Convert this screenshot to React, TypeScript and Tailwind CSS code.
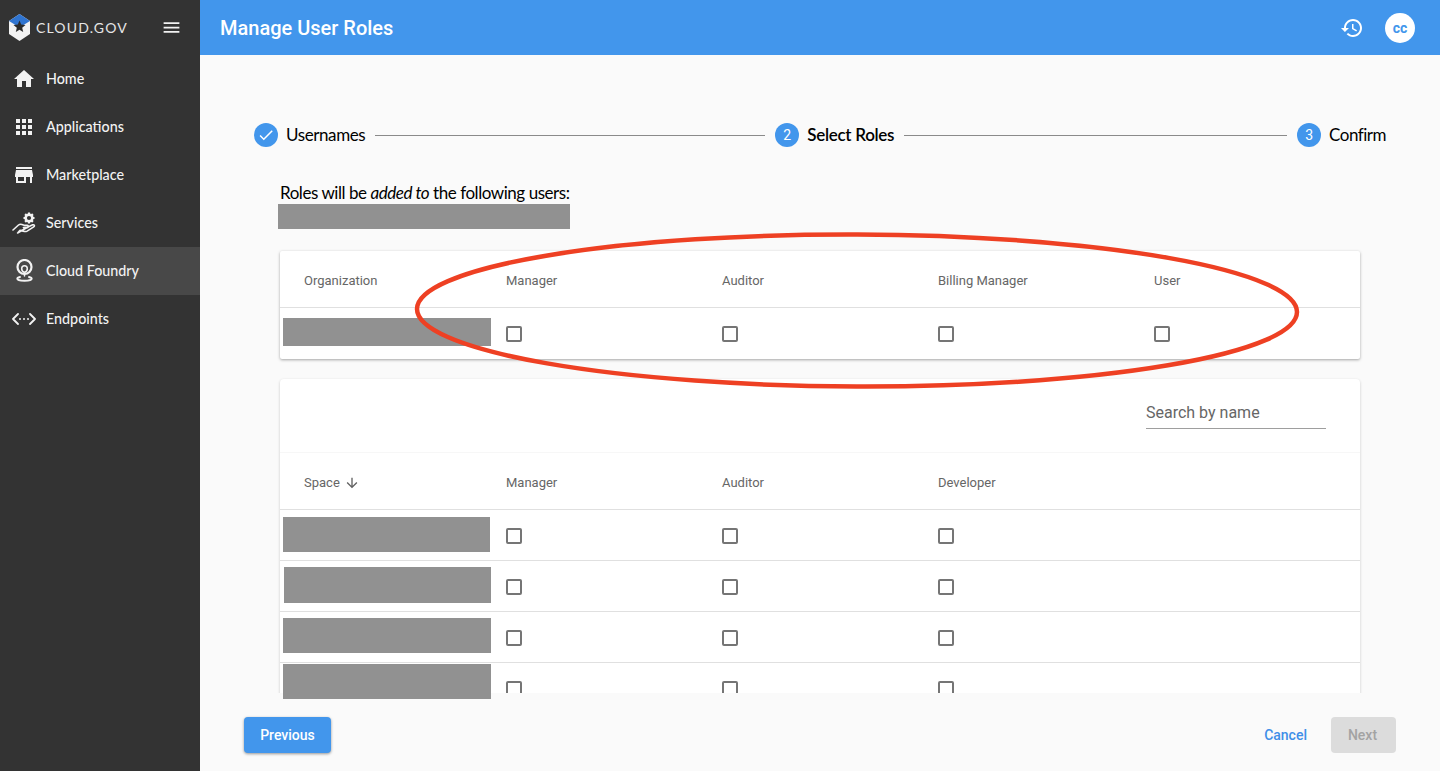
import { ReactNode } from "react";

const navItems = [
  { label: "Home", icon: "home" },
  { label: "Applications", icon: "apps" },
  { label: "Marketplace", icon: "store" },
  { label: "Services", icon: "services" },
  { label: "Cloud Foundry", icon: "foundry", active: true },
  { label: "Endpoints", icon: "endpoints" },
];

function MatIcon({ d, className }: { d: string; className?: string }) {
  return (
    <svg viewBox="0 0 24 24" className={className} fill="currentColor">
      <path d={d} />
    </svg>
  );
}

function NavIcon({ name }: { name: string }) {
  if (name === "home") return <MatIcon className="w-6 h-6" d="M10 20v-6h4v6h5v-8h3L12 3 2 12h3v8z" />;
  if (name === "apps")
    return (
      <MatIcon
        className="w-6 h-6"
        d="M4 8h4V4H4v4zm6 12h4v-4h-4v4zm-6 0h4v-4H4v4zm0-6h4v-4H4v4zm6 0h4v-4h-4v4zm6-10v4h4V4h-4zm-6 4h4V4h-4v4zm6 6h4v-4h-4v4zm0 6h4v-4h-4v4z"
      />
    );
  if (name === "store")
    return <MatIcon className="w-6 h-6" d="M20 4H4v2h16V4zm1 10v-2l-1-5H4l-1 5v2h1v6h10v-6h4v6h2v-6h1zm-9 4H6v-4h6v4z" />;
  if (name === "services")
    return (
      <svg viewBox="0 0 24 24" className="w-6 h-6" fill="none" stroke="currentColor" strokeWidth="1.6" strokeLinejoin="round" strokeLinecap="round">
        <circle cx="17" cy="7" r="4.6" fill="currentColor" stroke="none" />
        <path d="M17 1.500v11M11.500 7h11M13.100 3.100l7.800 7.800M20.900 3.100l-7.800 7.800" strokeWidth="2.200" strokeLinecap="butt" />
        <circle cx="17" cy="7" r="2.100" fill="#333333" stroke="none" />
        <path d="M1 19l5.500-5c1-.8 2.200-1 3.400-.6l3 1h2.500c1.200 0 1.200 2.200 0 2.200h-4M15.500 16.300l5.200-2.500c1.600-.5 2.300 1.200 1 2l-6.600 4.300c-1 .5-1.800.6-2.800.3l-4.300-1-2.400 2.600z" />
      </svg>
    );
  if (name === "foundry")
    return (
      <svg viewBox="0 0 24 24" className="w-6 h-6" fill="none" stroke="currentColor" strokeWidth="2.200" strokeLinecap="round" strokeLinejoin="round">
        <circle cx="12.500" cy="8" r="7" />
        <path d="M12.500 17V13.500c-1.800-.8-2.800-2.200-2.800-3.800 0-1.700 1.200-3 2.800-3s2.800 1.300 2.800 3c0 1.600-1 3-2.800 3.800" strokeWidth="1.500" />
        <path d="M8 18c-1.600.4-2.700 1-2.700 1.700 0 1.200 3.200 2.100 7.200 2.100s7.200-.9 7.200-2.100c0-.7-1.100-1.300-2.700-1.700" strokeWidth="1.900" />
      </svg>
    );
  return (
    <svg viewBox="0 0 24 24" className="w-6 h-6" fill="none" stroke="currentColor" strokeWidth="1.8" strokeLinecap="round" strokeLinejoin="round">
      <path d="M6 7l-5 5 5 5M18 7l5 5-5 5" />
      <circle cx="8" cy="12" r="1" fill="currentColor" stroke="none" />
      <circle cx="12" cy="12" r="1" fill="currentColor" stroke="none" />
      <circle cx="16" cy="12" r="1" fill="currentColor" stroke="none" />
    </svg>
  );
}

function Logo() {
  return (
    <svg viewBox="0 0 21 27" className="w-[21px] h-[27px] shrink-0">
      <path d="M10.500 0L21 7v13l-10.500 7L0 20V7z" fill="#f2f2f2" />
      <path d="M10.500 0L21 7l-10.500 6.500L0 7z" fill="#2f74d0" />
      <path d="M10.500 6.500l1.700 4 4.300.4-3.300 2.800 1 4.300-3.700-2.300-3.700 2.300 1-4.300-3.300-2.800 4.300-.4z" fill="#2b2b2b" />
    </svg>
  );
}

function Sidebar() {
  return (
    <aside className="w-[200px] shrink-0 bg-[#333333] text-[#f2f2f2]">
      <div className="h-[55px] flex items-center pl-[9px] pr-[18px]">
        <Logo />
        <span className="ml-[6px] text-[14px] tracking-[1.15px] text-[#e6e6e6] font-['Lato',sans-serif]">CLOUD.GOV</span>
        <MatIcon className="w-[21px] h-[21px] ml-auto" d="M3 18h18v-2H3v2zm0-5h18v-2H3v2zm0-7v2h18V6H3z" />
      </div>
      <nav className="flex flex-col">
        {navItems.map((item) => (
          <div key={item.label} className={`h-12 flex items-center pl-3 ${item.active ? "bg-[#484848]" : ""}`}>
            <NavIcon name={item.icon} />
            <span className="ml-[10px] text-[14.3px] font-['Lato',sans-serif] font-medium">{item.label}</span>
          </div>
        ))}
      </nav>
    </aside>
  );
}

function Step({ n, label, done, active, tight }: { n: number; label: string; done?: boolean; active?: boolean; tight?: boolean }) {
  return (
    <div className="flex items-center shrink-0">
      <div className="w-6 h-6 rounded-full bg-[#4296ec] text-white flex items-center justify-center text-sm font-['Roboto',sans-serif]">
        {done ? <MatIcon className="w-[18px] h-[18px]" d="M9 16.17L4.83 12l-1.42 1.41L9 19 21 7l-1.41-1.41z" /> : n}
      </div>
      <span
        className={`ml-2 text-[17px] leading-6 text-black font-['Lato',sans-serif] ${active ? "font-semibold tracking-[-0.3px]" : tight ? "tracking-[-0.5px]" : "tracking-[-0.4px]"}`}
      >
        {label}
      </span>
    </div>
  );
}

function Box() {
  return <div className="w-4 h-4 mt-[2px] border-2 border-[#757575] rounded-[2px]" />;
}

function Head({ children, first }: { children?: ReactNode; first?: boolean }) {
  return (
    <div className={`flex items-center pt-[3px] text-[13px] text-[#666666] ${first ? "pl-6" : ""}`}>{children}</div>
  );
}

function RoleCard({ first, columns, rows }: { first: ReactNode; columns: string[]; rows: number }) {
  return (
    <>
      <div className="grid grid-cols-[226px_216px_216px_216px_1fr] h-14 border-b border-[#e0e0e0] box-content">
        <Head first>{first}</Head>
        {[0, 1, 2, 3].map((i) => (
          <Head key={i}>{columns[i]}</Head>
        ))}
      </div>
      {Array.from({ length: rows }).map((_, r) => (
        <div key={r} className="grid grid-cols-[226px_216px_216px_216px_1fr] h-[50px] box-content border-b border-[#e0e0e0] last:border-b-0">
          <div />
          {columns.map((c) => (
            <div key={c} className="flex items-center">
              <Box />
            </div>
          ))}
        </div>
      ))}
    </>
  );
}

// covers painted over the screenshot, not part of the page itself
function Markup() {
  return (
    <>
      <div className="absolute left-[283px] top-[318px] w-[208px] h-[28px] bg-[#919191]" />
      <div className="absolute left-[283px] top-[517px] w-[207px] h-[35px] bg-[#919191]" />
      <div className="absolute left-[284px] top-[567px] w-[207px] h-[36px] bg-[#919191]" />
      <div className="absolute left-[283px] top-[618px] w-[208px] h-[35px] bg-[#919191]" />
      <div className="absolute left-[283px] top-[664px] w-[208px] h-[35px] bg-[#919191]" />
      <svg viewBox="0 0 1440 771" className="absolute left-0 top-0 w-[1440px] h-[771px] pointer-events-none" fill="none">
        <ellipse cx="857" cy="310.500" rx="440" ry="76" stroke="#ee4023" strokeWidth="4.500" transform="rotate(0.2 857 310.500)" />
      </svg>
    </>
  );
}

export default function App() {
  return (
    <div className="relative flex w-[1440px] h-[771px] overflow-hidden bg-[#fafafa] font-['Roboto',sans-serif]">
      <Sidebar />
      <main className="flex-1 flex flex-col min-w-0">
        <header className="h-[55px] shrink-0 bg-[#4296ec] text-white flex items-center pl-5 pr-[25px]">
          <h1 className="text-xl font-medium">Manage User Roles</h1>
          <MatIcon
            className="w-6 h-6 ml-auto"
            d="M13 3c-4.97 0-9 4.03-9 9H1l3.89 3.89.07.14L9 12H6c0-3.87 3.13-7 7-7s7 3.13 7 7-3.13 7-7 7c-1.93 0-3.68-.79-4.94-2.06l-1.42 1.42C8.27 19.99 10.51 21 13 21c4.97 0 9-4.03 9-9s-4.03-9-9-9zm-1 5v5l4.28 2.54.72-1.21-3.5-2.08V8H12z"
          />
          <div className="ml-[21px] w-[30px] h-[30px] rounded-full bg-white text-[#4296ec] flex items-center justify-center text-sm font-bold">
            cc
          </div>
        </header>

        <div className="flex-1 overflow-hidden">
          <div className="mt-[68px] mx-[54px] flex items-center">
            <Step n={1} label="Usernames" done />
            <div className="w-[390px] h-px bg-[#8a8a8a] mx-[10px]" />
            <Step n={2} label="Select Roles" active />
            <div className="flex-1 h-px bg-[#8a8a8a] mx-[10px]" />
            <Step n={3} label="Confirm" tight />
          </div>

          <div className="mx-[80px] mt-[36px]">
            <p className="h-5 leading-5 text-[17px] tracking-[-0.45px] text-black font-['Lato',sans-serif]">
              Roles will be <em>added to</em> the following users:
            </p>
            <div className="mt-px -ml-[2px] w-[292px] h-[25px] bg-[#919191]" />

            <section className="mt-[22px] h-[108px] bg-white rounded-[2px] shadow-[0_1px_3px_rgba(0,0,0,0.35)]">
              <RoleCard first="Organization" columns={["Manager", "Auditor", "Billing Manager", "User"]} rows={1} />
            </section>

            <section className="mt-5 bg-white rounded-t-[4px] shadow-[0_1px_3px_rgba(0,0,0,0.2)]">
              <div className="h-[74px] border-b border-[#f7f7f7] flex justify-end pr-[34px]">
                <div className="mt-[19px] w-[180px] h-[31px] border-b border-[#9e9e9e] text-base text-[#666666] leading-[29px]">
                  Search by name
                </div>
              </div>
              <RoleCard
                first={
                  <>
                    Space
                    <MatIcon className="w-4 h-4 ml-[4px] text-[#616161]" d="M20 12l-1.41-1.41L13 16.17V4h-2v12.17l-5.58-5.59L4 12l8 8 8-8z" />
                  </>
                }
                columns={["Manager", "Auditor", "Developer"]}
                rows={4}
              />
            </section>
          </div>
        </div>

        <footer className="h-[78px] shrink-0 bg-[#fafafa] relative flex items-start pt-6 pl-11 pr-11">
          <button className="w-[87px] h-9 rounded bg-[#4296ec] text-white text-sm font-medium shadow-[0_1px_3px_rgba(0,0,0,0.4)]">Previous</button>
          <button className="ml-auto text-sm font-medium text-[#3f8fe8] h-9">Cancel</button>
          <button className="ml-6 w-[65px] h-9 pr-[2px] rounded bg-[#dcdcdc] text-[#a3a3a3] text-sm font-medium">Next</button>
        </footer>
      </main>
      <Markup />
    </div>
  );
}
